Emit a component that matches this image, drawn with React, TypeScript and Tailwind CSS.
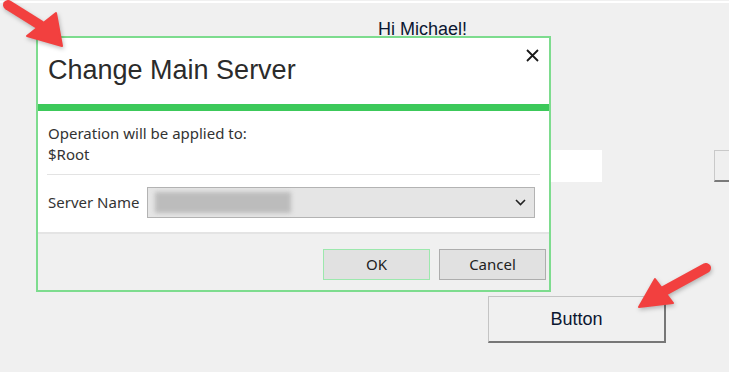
import type React from "react";

const sans = { fontFamily: '"Liberation Sans", Arial, sans-serif' };
const ui = { fontFamily: '"Noto Sans", "Open Sans", sans-serif' };

function Arrow({
	className,
	tail,
	base,
	head,
}: {
	className: string;
	tail: [number, number];
	base: [number, number];
	head: string;
}) {
	return (
		<svg
			className={className}
			width="729"
			height="372"
			viewBox="0 0 729 372"
			style={{ filter: "drop-shadow(1px 2px 2px rgba(0,0,0,0.25))" }}
		>
			<line
				x1={tail[0]}
				y1={tail[1]}
				x2={base[0]}
				y2={base[1]}
				stroke="#f2403f"
				strokeWidth="10"
				strokeLinecap="round"
			/>
			<polygon points={head} fill="#f2403f" strokeLinejoin="round" stroke="#f2403f" strokeWidth="2" />
		</svg>
	);
}

function DialogButton({ children, focused }: { children: React.ReactNode; focused?: boolean }) {
	return (
		<button
			className={
				focused
					? "w-[107px] h-[31px] bg-[#e1e1e1] border border-[#9ce8ad] text-[15px] text-[#222]"
					: "w-[107px] h-[31px] bg-[#e1e1e1] border border-[#adadad] text-[15px] text-[#222]"
			}
			style={ui}
		>
			{children}
		</button>
	);
}

export default function App() {
	return (
		<div className="relative w-[729px] h-[372px] bg-[#f0f0f0] overflow-hidden text-[#111]">
			{/* form behind the dialog */}
			<div className="mt-px h-[2px] bg-white" />
			<div className="pl-[378px] pt-[15px] text-[18px] leading-[22px] text-[#0b1730]" style={sans}>
				Hi Michael!
			</div>
			<div className="flex mt-[110px] pl-[400px]">
				<div className="shrink-0 w-[202px] h-[32px] bg-white" />
				<div className="shrink-0 ml-[112px] w-[60px] h-[32px] border border-[#c9c9c9] border-b-2 border-b-[#7a7a7a] bg-[#efefef]" />
			</div>
			<div className="pl-[488px] mt-[114px]">
				<div
					className="w-[178px] h-[47px] flex items-center justify-center border border-[#c4c4c4] border-b-2 border-r-2 border-b-[#777] border-r-[#777] text-[18px] text-[#0b1730]"
					style={sans}
				>
					Button
				</div>
			</div>

			{/* dialog */}
			<div className="absolute left-[36px] top-[36px] w-[515px] h-[256px] border-2 border-[#7ddc8e] bg-[#f0f0f0] flex flex-col">
				<div className="h-[66px] bg-white flex items-start justify-between pl-[10px] pr-[10px]">
					<div className="mt-[16px] text-[27px] leading-[32px] text-[#2b2b2b]" style={sans}>
						Change Main Server
					</div>
					<svg width="13" height="13" viewBox="0 0 13 13" className="mt-[11px]">
						<path d="M1 1 L12 12 M12 1 L1 12" stroke="#1a1a1a" strokeWidth="1.8" />
					</svg>
				</div>
				<div className="h-[7px] bg-[#3cc95a]" />
				<div className="h-[121px] bg-white px-[10px] pt-[12px] text-[15px] leading-[21px] text-[#333]" style={ui}>
					<div>Operation will be applied to:</div>
					<div>$Root</div>
					<div className="mt-[9px] -mx-px h-px bg-[#e3e3e3]" />
					<div className="flex items-center mt-[12px]">
						<div className="w-[99px]">Server Name</div>
						<div className="flex items-center justify-between w-[388px] h-[31px] bg-[#e5e5e5] border border-[#b3b3b3] pl-[7px] pr-[8px]">
							<div className="w-[136px] h-[21px] bg-[#bcbcbc] blur-[2px]" />
							<svg width="11" height="7" viewBox="0 0 11 7">
								<path d="M1 1 L5.5 5.5 L10 1" fill="none" stroke="#222" strokeWidth="1.6" />
							</svg>
						</div>
					</div>
				</div>
				<div className="flex-1 border-t-2 border-[#e4e4e4] flex justify-end items-start gap-[9px] pt-[15px] pr-[3px]">
					<DialogButton focused>OK</DialogButton>
					<DialogButton>Cancel</DialogButton>
				</div>
			</div>

			{/* annotation arrows */}
			<Arrow
				className="absolute left-0 top-0 pointer-events-none"
				tail={[8, 5]}
				base={[40, 25]}
				head="27,36 56,13 62,46"
			/>
			<Arrow
				className="absolute left-0 top-0 pointer-events-none"
				tail={[706, 268]}
				base={[664, 291]}
				head="655,279 673,303 639,307"
			/>
		</div>
	);
}
